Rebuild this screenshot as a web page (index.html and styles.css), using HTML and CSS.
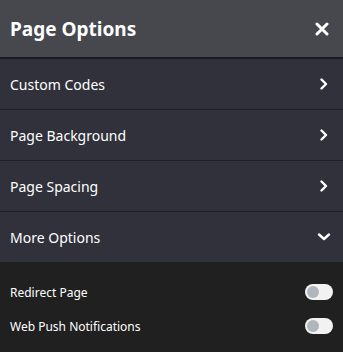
FILE: index.html
```html
<!DOCTYPE html>
<html lang="en">
<head>
  <meta charset="UTF-8">
  <title>Page Options</title>
  <link rel="stylesheet" href="styles.css">
</head>
<body>
  <div class="panel">
    <header class="panel-head">
      <h1>Page Options</h1>
      <svg class="close" width="14" height="14" viewBox="0 0 14 14"><path d="M2 2 L12 12 M12 2 L2 12" stroke="#fff" stroke-width="3" stroke-linecap="round"/></svg>
    </header>

    <div class="row">
      <span>Custom Codes</span>
      <svg class="chev" width="10" height="12" viewBox="0 0 10 12"><path d="M2.5 1.5 L7 6 L2.5 10.5" fill="none" stroke="#fff" stroke-width="2.4" stroke-linecap="round" stroke-linejoin="round"/></svg>
    </div>
    <div class="row">
      <span>Page Background</span>
      <svg class="chev" width="10" height="12" viewBox="0 0 10 12"><path d="M2.5 1.5 L7 6 L2.5 10.5" fill="none" stroke="#fff" stroke-width="2.4" stroke-linecap="round" stroke-linejoin="round"/></svg>
    </div>
    <div class="row">
      <span>Page Spacing</span>
      <svg class="chev" width="10" height="12" viewBox="0 0 10 12"><path d="M2.5 1.5 L7 6 L2.5 10.5" fill="none" stroke="#fff" stroke-width="2.4" stroke-linecap="round" stroke-linejoin="round"/></svg>
    </div>
    <div class="row last">
      <span>More Options</span>
      <svg class="chev down" width="14" height="10" viewBox="0 0 14 10"><path d="M2 2.5 L7 7 L12 2.5" fill="none" stroke="#fff" stroke-width="2.4" stroke-linecap="round" stroke-linejoin="round"/></svg>
    </div>

    <section class="more">
      <div class="opt">
        <span>Redirect Page</span>
        <span class="toggle"><span class="knob"></span></span>
      </div>
      <div class="opt">
        <span>Web Push Notifications</span>
        <span class="toggle"><span class="knob"></span></span>
      </div>
    </section>
  </div>
</body>
</html>
```

FILE: styles.css
```css
body {
  margin: 0;
  font-family: 'Noto Sans', 'Open Sans', sans-serif;
  color: #fff;
  background: #202020;
}

.panel {
  width: 343px;
  height: 352px;
  background: #202020;
}

.panel-head {
  height: 57px;
  background: #47484d;
  border-bottom: 2px solid #1c1c20;
  display: flex;
  align-items: center;
  justify-content: space-between;
  padding: 0 14px 0 10px;
}

.panel-head h1 {
  margin: 0;
  font-size: 19px;
  font-weight: 700;
}

.row {
  height: 50px;
  background: #30313a;
  border-bottom: 1px solid #1f2024;
  display: flex;
  align-items: center;
  justify-content: space-between;
  padding: 0 14px 0 10px;
  font-size: 14px;
}

.row.last {
  border-bottom: none;
}

.chev.down {
  margin-right: -2px;
}

.more {
  padding: 13px 10px 0 10px;
}

.opt {
  height: 34px;
  display: flex;
  align-items: center;
  justify-content: space-between;
  font-size: 12px;
}

.toggle {
  width: 28px;
  height: 16px;
  border-radius: 8px;
  background: #f2f2f2;
  display: flex;
  align-items: center;
  padding: 0 2px;
  box-sizing: border-box;
}

.knob {
  width: 12px;
  height: 12px;
  border-radius: 50%;
  background: #b1b5bc;
}
```
